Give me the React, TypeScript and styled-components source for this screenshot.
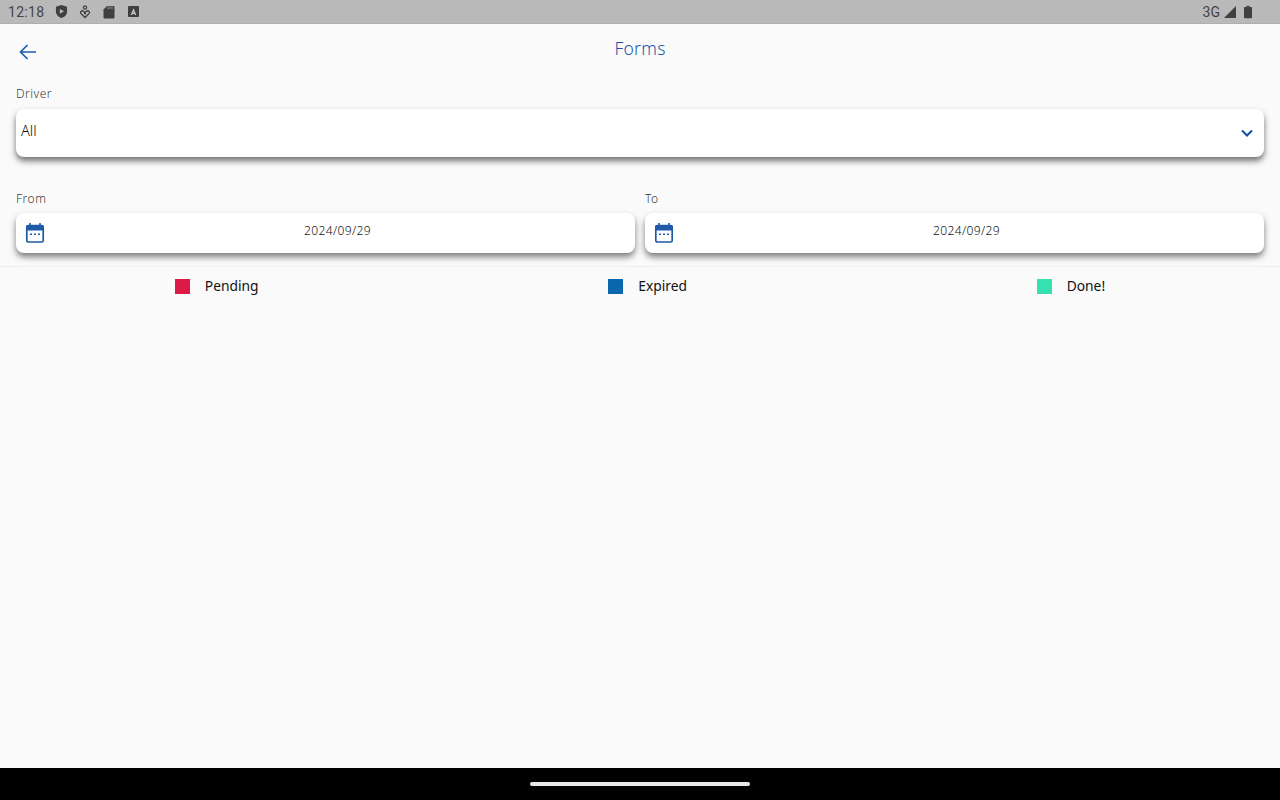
import React from "react";
import styled, { createGlobalStyle } from "styled-components";

const Global = createGlobalStyle`
  html, body { margin: 0; padding: 0; background: #fafafa; }
  body { font-family: "Noto Sans", sans-serif; }
`;

const Screen = styled.div`
  width: 1280px;
  height: 800px;
  display: flex;
  flex-direction: column;
  overflow: hidden;
  background: #fafafa;
`;

const StatusBar = styled.div`
  height: 23px;
  flex: none;
  background: #b9b9b9;
  border-bottom: 1px solid #b0b0b0;
  display: flex;
  align-items: center;
  justify-content: space-between;
  padding: 0 28px 0 8px;
  color: #444;
  font-family: Roboto, sans-serif;
  font-size: 14px;
`;

const StatusGroup = styled.div`
  display: flex;
  align-items: center;
`;

const Clock = styled.span`
  width: 47px;
  letter-spacing: 0.3px;
`;

const StatusIcon = styled.svg<{ $gap?: number }>`
  display: block;
  margin-right: ${(p) => p.$gap ?? 0}px;
`;

const NetLabel = styled.span`
  margin-right: 3px;
  font-size: 14px;
`;

const Header = styled.header`
  height: 56px;
  flex: none;
  display: grid;
  grid-template-columns: 56px 1fr 56px;
  align-items: center;
  background: #fafafa;
`;

const BackButton = styled.div`
  padding: 0 0 1px 17px;
  display: flex;
`;

const Title = styled.h1`
  margin: 0 0 9px;
  text-align: center;
  font-size: 17.5px;
  font-weight: 300;
  color: #1a58a8;
  letter-spacing: 0.25px;
`;

const Form = styled.section`
  padding: 6px 16px 0;
  display: flex;
  flex-direction: column;
`;

const Label = styled.div`
  font-size: 12px;
  line-height: 16px;
  font-weight: 300;
  color: #3a3a3a;
  letter-spacing: 0.5px;
`;

const SelectBox = styled.div`
  height: 48px;
  margin-top: 7px;
  border-radius: 8px;
  background: #fff;
  box-shadow: 0 4px 6px rgba(0, 0, 0, 0.55);
  display: flex;
  align-items: center;
  justify-content: space-between;
  padding: 0 10px 0 5px;
`;

const SelectValue = styled.span`
  font-size: 14.5px;
  font-weight: 300;
  color: #111;
  margin-top: -7px;
`;

const DateRow = styled.div`
  display: grid;
  grid-template-columns: 1fr 1fr;
  gap: 10px;
  margin-top: 34px;
`;

const DateColumn = styled.div`
  display: flex;
  flex-direction: column;
`;

const DateField = styled.div`
  height: 40px;
  margin-top: 6px;
  border-radius: 8px;
  background: #fff;
  box-shadow: 0 4px 6px rgba(0, 0, 0, 0.5);
  display: flex;
  align-items: center;
  padding: 0 9px;
`;

const DateValue = styled.span`
  flex: 1;
  text-align: center;
  font-size: 12px;
  font-weight: 300;
  color: #111;
  letter-spacing: 0.4px;
  margin-top: -6px;
  padding-left: 4px;
`;

const Divider = styled.div`
  height: 1px;
  margin-top: 13px;
  background: #eeeeee;
`;

const Legend = styled.div`
  display: flex;
  justify-content: space-around;
  align-items: center;
  height: 38px;
`;

const LegendItem = styled.div`
  display: flex;
  align-items: center;
  gap: 15px;
  font-size: 13.8px;
  color: #111;
`;

const LegendText = styled.span`
  margin-top: -2px;
`;

const Swatch = styled.span<{ $color: string }>`
  display: block;
  width: 15px;
  height: 15px;
  background: ${(p) => p.$color};
`;

const Spacer = styled.div`
  flex: 1;
`;

const NavBar = styled.div`
  height: 32px;
  flex: none;
  background: #000;
  display: flex;
  justify-content: center;
  padding-top: 14px;
  box-sizing: border-box;
`;

const HomePill = styled.div`
  width: 220px;
  height: 4px;
  border-radius: 2px;
  background: #e6e6e6;
`;

const CalendarIcon = () => (
  <svg width="20" height="22" viewBox="0 0 20 22" style={{ flex: "none" }}>
    <rect x="1.8" y="3.5" width="16.4" height="16.5" rx="1.6" fill="none" stroke="#1f5aa6" strokeWidth="1.7" />
    <path d="M1.5 3.5h17v5h-17z" fill="#1f5aa6" />
    <path d="M5 1v3M15 1v3" stroke="#1f5aa6" strokeWidth="1.6" />
    <path d="M5 11.5h2v1.6H5zM9 11.5h2v1.6H9zM13 11.5h2v1.6h-2z" fill="#1f5aa6" />
  </svg>
);

export default function App() {
  return (
    <Screen>
      <Global />
      <StatusBar>
        <StatusGroup>
          <Clock>12:18</Clock>
          <StatusIcon $gap={11} width="13" height="15" viewBox="0 0 14 16">
            <path d="M7 1l6 2v5c0 3.500-2.600 6-6 7-3.400-1-6-3.500-6-7V3z" fill="#3f3f3f" />
            <path d="M5.200 5.200v5.200L9.800 7.800z" fill="#b9b9b9" />
          </StatusIcon>
          <StatusIcon $gap={12} width="12" height="14" viewBox="0 0 12 14">
            <circle cx="6" cy="2.500" r="1.600" fill="none" stroke="#3f3f3f" strokeWidth="1.200" />
            <path d="M6 12.500L1.800 8.400C.8 6.800 2.900 5 4.300 6.200L6 7.600l1.700-1.400C9.100 5 11.200 6.800 10.200 8.400z" fill="none" stroke="#3f3f3f" strokeWidth="1.300" />
            <circle cx="6" cy="8.600" r="1" fill="#3f3f3f" />
          </StatusIcon>
          <StatusIcon $gap={13} width="12" height="14" viewBox="0 0 12 14">
            <path d="M4 1h6.500a1 1 0 0 1 1 1v10.500a1 1 0 0 1-1 1h-9a1 1 0 0 1-1-1V4.500z" fill="#3f3f3f" />
            <path d="M5 1.500v2.500M7 1.500v2.500M9 1.500v2.500" stroke="#b9b9b9" strokeWidth=".7" />
          </StatusIcon>
          <StatusIcon width="11" height="11" viewBox="0 0 11 11">
            <rect width="11" height="11" rx="1" fill="#3f3f3f" />
            <path d="M5.500 2.200L8.300 9H6.900l-.4-1.100H4.500L4.100 9H2.700zM5 6.800h1L5.500 5.400z" fill="#c8c8c8" />
          </StatusIcon>
        </StatusGroup>
        <StatusGroup>
          <NetLabel>3G</NetLabel>
          <StatusIcon $gap={7} width="14" height="14" viewBox="0 0 14 14">
            <path d="M13 1v12H1z" fill="#3f3f3f" />
          </StatusIcon>
          <StatusIcon width="8" height="14" viewBox="0 0 9 14">
            <path d="M3 0h3v1.500h2a1 1 0 0 1 1 1V13a1 1 0 0 1-1 1H1a1 1 0 0 1-1-1V2.500a1 1 0 0 1 1-1h2z" fill="#3f3f3f" />
          </StatusIcon>
        </StatusGroup>
      </StatusBar>
      <Header>
        <BackButton>
          <svg width="22" height="22" viewBox="0 0 22 22" fill="none" stroke="#1f5fae" strokeWidth="1.700">
            <path d="M19 11H4M10.500 4 3.500 11l7 7" />
          </svg>
        </BackButton>
        <Title>Forms</Title>
      </Header>
      <Form>
        <Label>Driver</Label>
        <SelectBox>
          <SelectValue>All</SelectValue>
          <svg width="14" height="10" viewBox="0 0 14 10" fill="none" stroke="#0f4fa0" strokeWidth="2">
            <path d="M2 2.500l5 5 5-5" />
          </svg>
        </SelectBox>
        <DateRow>
          <DateColumn>
            <Label>From</Label>
            <DateField>
              <CalendarIcon />
              <DateValue>2024/09/29</DateValue>
            </DateField>
          </DateColumn>
          <DateColumn>
            <Label>To</Label>
            <DateField>
              <CalendarIcon />
              <DateValue>2024/09/29</DateValue>
            </DateField>
          </DateColumn>
        </DateRow>
      </Form>
      <Divider />
      <Legend>
        <LegendItem><Swatch $color="#dc1a48" /><LegendText>Pending</LegendText></LegendItem>
        <LegendItem><Swatch $color="#0a66ad" /><LegendText>Expired</LegendText></LegendItem>
        <LegendItem><Swatch $color="#36e0b0" /><LegendText>Done!</LegendText></LegendItem>
      </Legend>
      <Spacer />
      <NavBar><HomePill /></NavBar>
    </Screen>
  );
}
